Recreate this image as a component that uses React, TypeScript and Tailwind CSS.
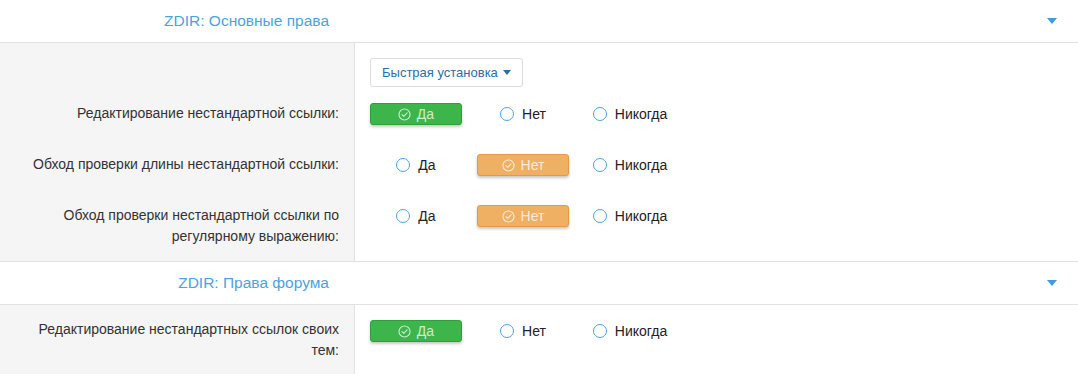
import React from "react";

type Opt = "yes" | "no" | "never";

function CheckCircle() {
  return (
    <svg width="13" height="13" viewBox="0 0 16 16" fill="none" className="shrink-0">
      <circle cx="8" cy="8" r="6.8" stroke="currentColor" strokeWidth="1.4" />
      <path d="M4.9 8.2 L7.1 10.3 L11.2 5.9" stroke="currentColor" strokeWidth="1.4" fill="none" strokeLinecap="round" strokeLinejoin="round" />
    </svg>
  );
}

function Radio() {
  return <span className="inline-block w-[14px] h-[14px] rounded-full border-[1.6px] border-[#4aa3df] bg-white shrink-0" />;
}

function Option({ label, selected, tone }: { label: string; selected: boolean; tone: "green" | "orange" }) {
  if (selected) {
    const cls =
      tone === "green"
        ? "bg-[#3cb54b] border-[#2f9f3e]"
        : "bg-[#f0b064] border-[#e39a43]";
    return (
      <div
        className={`w-[92px] h-[22px] rounded-[3px] border ${cls} flex items-center justify-center gap-[6px] text-[rgba(255,255,255,0.75)] shadow-[0_2px_3px_rgba(0,0,0,0.22)]`}
      >
        <CheckCircle />
        <span className="text-[14px] leading-none">{label}</span>
      </div>
    );
  }
  return (
    <div className="w-[92px] h-[22px] flex items-center justify-center gap-[8px]">
      <Radio />
      <span className="text-[14px] leading-none text-[#222]">{label}</span>
    </div>
  );
}

function Row({
  label,
  value,
  tone,
  compact,
}: {
  label: React.ReactNode;
  value: Opt;
  tone: "green" | "orange";
  compact?: boolean;
}) {
  return (
    <div className="flex">
      <div
        className={`w-[355px] shrink-0 bg-[#f5f5f5] border-r border-[#e2e2e2] text-right pr-[15px] pl-[20px] text-[14px] leading-[21px] text-[#333] ${
          compact ? "pt-[14px] pb-[15px]" : "pt-[16px] pb-[14px]"
        }`}
      >
        {label}
      </div>
      <div className={`flex-1 pl-[15px] ${compact ? "pt-[15px]" : "pt-[16px]"}`}>
        <div className="flex gap-[15px]">
          <Option label="Да" selected={value === "yes"} tone={tone} />
          <Option label="Нет" selected={value === "no"} tone={tone} />
          <Option label="Никогда" selected={value === "never"} tone={tone} />
        </div>
      </div>
    </div>
  );
}

function Header({ title, top }: { title: string; top?: boolean }) {
  return (
    <div
      className={`flex items-center border-b border-[#e2e2e2] bg-white ${
        top ? "border-t h-[44px]" : "h-[43px]"
      }`}
    >
      <div className="w-[355px] shrink-0 text-right pr-[15px]">
        <span className="text-[15.5px] text-[#4aa3df] mr-[11px]">{title}</span>
      </div>
      <div className="flex-1 flex justify-end pr-[21px]">
        <svg width="10" height="6" viewBox="0 0 10 6">
          <path d="M0 0 L10 0 L5 6 Z" fill="#3d9be2" />
        </svg>
      </div>
    </div>
  );
}

export default function App() {
  return (
    <div
      className="w-[1078px] h-[374px] overflow-hidden bg-white"
      style={{ fontFamily: '"Liberation Sans", Arial, sans-serif' }}
    >
      <Header title="ZDIR: Основные права" />
      <div className="flex">
        <div className="w-[355px] shrink-0 bg-[#f5f5f5] border-r border-[#e2e2e2]" />
        <div className="flex-1 pl-[15px] pt-[15px]">
          <button className="h-[29px] px-[11px] border border-[#dcdcdc] rounded-[3px] bg-white text-[13px] text-[#2b6ea6] flex items-center gap-[5px]">
            Быстрая установка
            <svg width="8" height="5" viewBox="0 0 8 5">
              <path d="M0 0 L8 0 L4 5 Z" fill="#2b6ea6" />
            </svg>
          </button>
        </div>
      </div>
      <Row label="Редактирование нестандартной ссылки:" value="yes" tone="green" />
      <Row label="Обход проверки длины нестандартной ссылки:" value="no" tone="orange" />
      <Row label="Обход проверки нестандартной ссылки по регулярному выражению:" value="no" tone="orange" />
      <Header title="ZDIR: Права форума" top />
      <Row label="Редактирование нестандартных ссылок своих тем:" value="yes" tone="green" compact />
    </div>
  );
}
